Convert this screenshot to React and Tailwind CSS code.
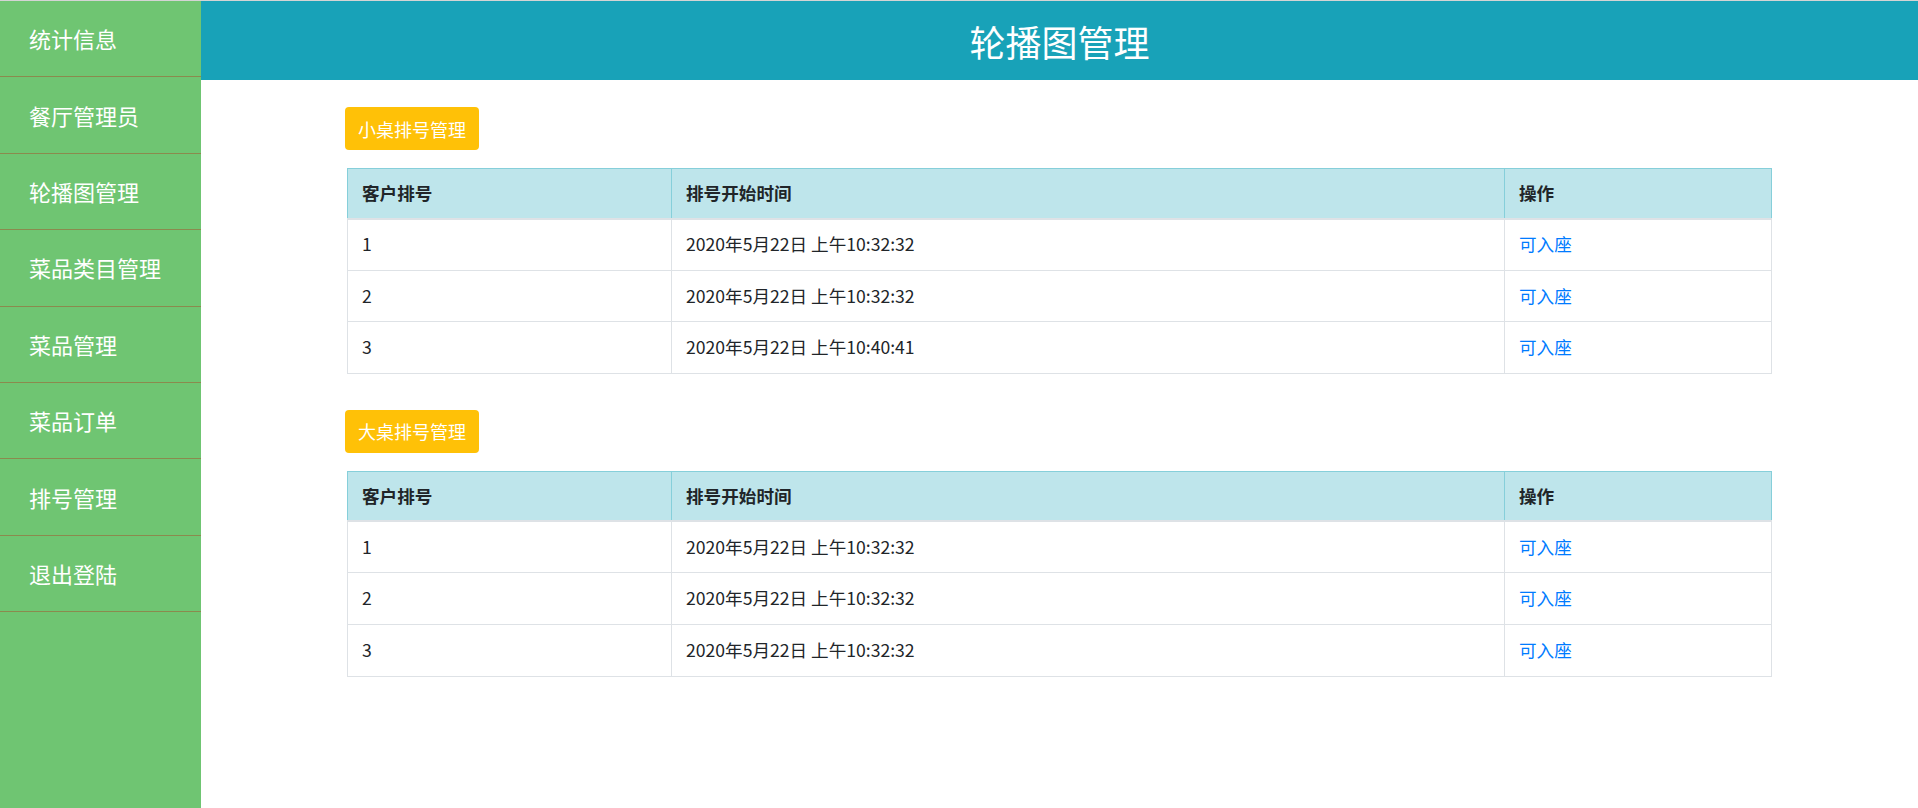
import React from "react";

const menu = ["统计信息", "餐厅管理员", "轮播图管理", "菜品类目管理", "菜品管理", "菜品订单", "排号管理", "退出登陆"];

const small = [
    { no: 1, time: "2020年5月22日 上午10:32:32" },
    { no: 2, time: "2020年5月22日 上午10:32:32" },
    { no: 3, time: "2020年5月22日 上午10:40:41" },
];

const big = [
    { no: 1, time: "2020年5月22日 上午10:32:32" },
    { no: 2, time: "2020年5月22日 上午10:32:32" },
    { no: 3, time: "2020年5月22日 上午10:32:32" },
];

const QueueTable = ({ title, rows, className }) => {
    return (
        <div className={className}>
            <button className="-ml-[2px] h-[43px] px-[13px] rounded-[4px] bg-[#ffc107] text-white text-[18px] leading-none">
                {title}
            </button>
            <table className="mt-[18px] w-full border-collapse text-[17.6px] text-[#212529]">
                <thead>
                    <tr className="bg-[#bee5eb]">
                        <th className="w-[324px] h-[50px] border border-[#86cfda] border-b-2 border-b-[#dee2e6] px-[14px] text-left font-bold">
                            客户排号
                        </th>
                        <th className="w-[833px] h-[50px] border border-[#86cfda] border-b-2 border-b-[#dee2e6] px-[14px] text-left font-bold">
                            排号开始时间
                        </th>
                        <th className="h-[50px] border border-[#86cfda] border-b-2 border-b-[#dee2e6] px-[14px] text-left font-bold">
                            操作
                        </th>
                    </tr>
                </thead>
                <tbody>
                    {rows.map((r) => (
                        <tr key={r.no}>
                            <td className="h-[51.6px] border border-[#dee2e6] px-[14px]">{r.no}</td>
                            <td className="h-[51.6px] border border-[#dee2e6] px-[14px]">{r.time}</td>
                            <td className="h-[51.6px] border border-[#dee2e6] px-[14px]">
                                <a className="text-[#007bff] cursor-pointer">可入座</a>
                            </td>
                        </tr>
                    ))}
                </tbody>
            </table>
        </div>
    );
};

const App = () => {
    return (
        <div
            className="flex h-screen w-full border-t border-[#d4d4d4] bg-white"
            style={{ fontFamily: '"Noto Sans CJK SC", "Open Sans", sans-serif' }}
        >
            <aside className="w-[201px] shrink-0 bg-[#6fc572]">
                {menu.map((m) => (
                    <div
                        key={m}
                        className="h-[76.4px] flex items-center pl-[29px] border-b border-[#8b8a4e] text-white text-[22px] cursor-pointer"
                    >
                        {m}
                    </div>
                ))}
            </aside>
            <main className="flex-1">
                <header className="h-[79px] bg-[#18a2b8] flex items-center justify-center text-white text-[36px]">
                    轮播图管理
                </header>
                <div className="w-[1425px] mx-auto pt-[27px]">
                    <QueueTable title="小桌排号管理" rows={small} />
                    <QueueTable title="大桌排号管理" rows={big} className="mt-[36px]" />
                </div>
            </main>
        </div>
    );
};

export default App;
